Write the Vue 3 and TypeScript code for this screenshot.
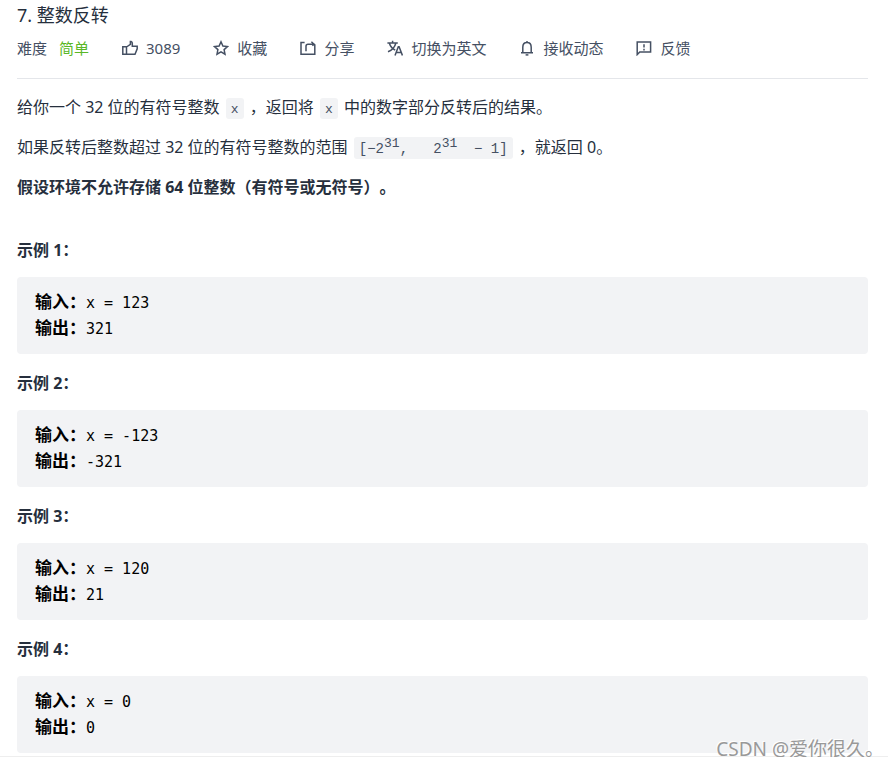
<script setup lang="ts">
interface Action {
  name: string
  label: string
}

interface Example {
  id: number
  input: string
  output: string
}

const actions: Action[] = [
  { name: 'like', label: '3089' },
  { name: 'star', label: '收藏' },
  { name: 'share', label: '分享' },
  { name: 'translate', label: '切换为英文' },
  { name: 'bell', label: '接收动态' },
  { name: 'feedback', label: '反馈' },
]

const examples: Example[] = [
  { id: 1, input: 'x = 123', output: '321' },
  { id: 2, input: 'x = -123', output: '-321' },
  { id: 3, input: 'x = 120', output: '21' },
  { id: 4, input: 'x = 0', output: '0' },
]
</script>

<template>
  <main class="problem">
    <header class="head">
      <h1 class="title">7. 整数反转</h1>
      <div class="meta">
        <div class="difficulty">
          <span>难度</span>
          <span class="level">简单</span>
        </div>
        <button v-for="action in actions" :key="action.name" type="button" class="action">
          <svg v-if="action.name === 'like'" class="icon" viewBox="0 0 16 16" aria-hidden="true">
            <path d="M.8 6.8h3.7v7.4H.8zM4.5 7 8.4 4.4V1.6h.9q1 .4 1 1.6v3h4.9v2.6l-2.2 5.4H4.5" />
          </svg>
          <svg v-else-if="action.name === 'star'" class="icon" viewBox="0 0 16 16" aria-hidden="true">
            <path d="m8 1.8 1.9 4.2 4.6.5-3.4 3.1.9 4.6L8 11.9l-4 2.3.9-4.6L1.5 6.5 6.1 6z" />
          </svg>
          <svg v-else-if="action.name === 'share'" class="icon" viewBox="0 0 16 16" aria-hidden="true">
            <path d="M4.6 2.4H1v11.9h13.8V4.2M6 11.2V6.2q0-2 2-2h6.8M11.4 1.8l2.6 2.4-1.6 1.6" />
          </svg>
          <svg v-else-if="action.name === 'translate'" class="icon" viewBox="0 0 16 16" aria-hidden="true">
            <path d="M.4 3h10.4M5.6.8V3M2.4 3.2c1 3.4 3.6 5.8 5.8 7M8.8 3.2c-1 3.8-4 7-7.8 8.6" />
            <path d="m8 15.4 3.3-8.6h.8l3.3 8.6M9.2 12.4h5" />
          </svg>
          <svg v-else-if="action.name === 'bell'" class="icon" viewBox="0 0 16 16" aria-hidden="true">
            <path d="M8 1v1.6M2 12.7h12M3.8 12.5V7.2C3.8 4.2 5.5 2.6 8 2.6s4.2 1.6 4.2 4.6v5.3" />
            <path d="M6.6 14.9h2.8" />
          </svg>
          <svg v-else class="icon" viewBox="0 0 16 16" aria-hidden="true">
            <path d="M1.2 14.6V2h13.4v10H3.8z" />
            <path d="M8 4.2v3.4M8 8.8v1.6" />
          </svg>
          <span>{{ action.label }}</span>
        </button>
      </div>
    </header>

    <section class="content">
      <p>给你一个 32 位的有符号整数 <code>x</code> ，返回将 <code>x</code> 中的数字部分反转后的结果。</p>
      <p>
        如果反转后整数超过 32 位的有符号整数的范围 <code class="range">[−2<sup>31</sup>,&nbsp;&nbsp; 2<sup>31</sup>&nbsp; − 1]</code> ，就返回 0。
      </p>
      <p><strong>假设环境不允许存储 64 位整数（有符号或无符号）。</strong></p>
    </section>

    <section class="examples">
      <article v-for="example in examples" :key="example.id" class="example">
        <h2>示例 {{ example.id }}：</h2>
        <pre><strong>输入：</strong>{{ example.input }}
<strong>输出：</strong>{{ example.output }}</pre>
      </article>
    </section>
  </main>
  <footer class="foot">
    <span class="watermark">CSDN @爱你很久。</span>
  </footer>
</template>

<style>
body {
  margin: 0;
  background: #fff;
}
</style>

<style scoped>
.problem {
  padding: 3px 20px 3px 17px;
  color: #262f3d;
  font-family: "Noto Sans", "Noto Sans CJK SC", sans-serif;
  font-size: 16px;
  line-height: 24px;
  text-spacing-trim: space-all;
}

.head {
  border-bottom: 1px solid #e4e6ea;
  padding-bottom: 18px;
}

.title {
  margin: 0;
  font-size: 18px;
  font-weight: 400;
  line-height: 24px;
}

.meta {
  display: flex;
  flex-wrap: wrap;
  gap: 0 33px;
  margin-top: 9px;
  color: #455063;
  font-size: 15px;
  line-height: 24px;
}

.difficulty {
  display: flex;
  gap: 12px;
}

.level {
  color: #5ab726;
}

.action {
  display: flex;
  align-items: center;
  gap: 8px;
  padding: 0;
  border: 0;
  background: none;
  color: inherit;
  font: inherit;
  cursor: pointer;
}

.icon {
  width: 16px;
  height: 16px;
  fill: none;
  stroke: currentColor;
  stroke-width: 1.5;
}

.content {
  padding-top: 16px;
}

.content p {
  margin: 0 0 16px;
}

code {
  margin: 0 2px;
  padding: 4px 5px 2px;
  border-radius: 3px;
  background: #f2f3f5;
  color: #455063;
  font-family: "Liberation Mono", monospace;
  font-size: 13px;
  line-height: 1;
}

.range {
  font-size: 14px;
}

sup {
  font-size: 13px;
  line-height: 0;
}

.examples {
  display: flex;
  flex-direction: column;
  gap: 17px;
  padding-top: 23px;
}

.example h2 {
  margin: 0 0 15px;
  font-size: 16px;
  font-weight: 700;
  line-height: 24px;
}

.example pre {
  margin: 0;
  padding: 13px 18px 12px;
  border-radius: 4px;
  background: #f2f3f5;
  color: #000;
  font-family: "DejaVu Sans Mono", "Noto Sans CJK SC", monospace;
  font-size: 15px;
  line-height: 26px;
}

.example pre strong {
  font-family: "Noto Sans CJK SC", sans-serif;
  font-size: 17px;
  line-height: 17px;
}

.foot {
  position: relative;
  border-top: 1px solid #eee;
}

.watermark {
  position: absolute;
  right: 4px;
  bottom: -6px;
  color: #999;
  font-family: "Noto Sans", "Noto Sans CJK SC", sans-serif;
  font-size: 19px;
  line-height: 28px;
  text-shadow: -1px -1px 0 #fff;
}
</style>
